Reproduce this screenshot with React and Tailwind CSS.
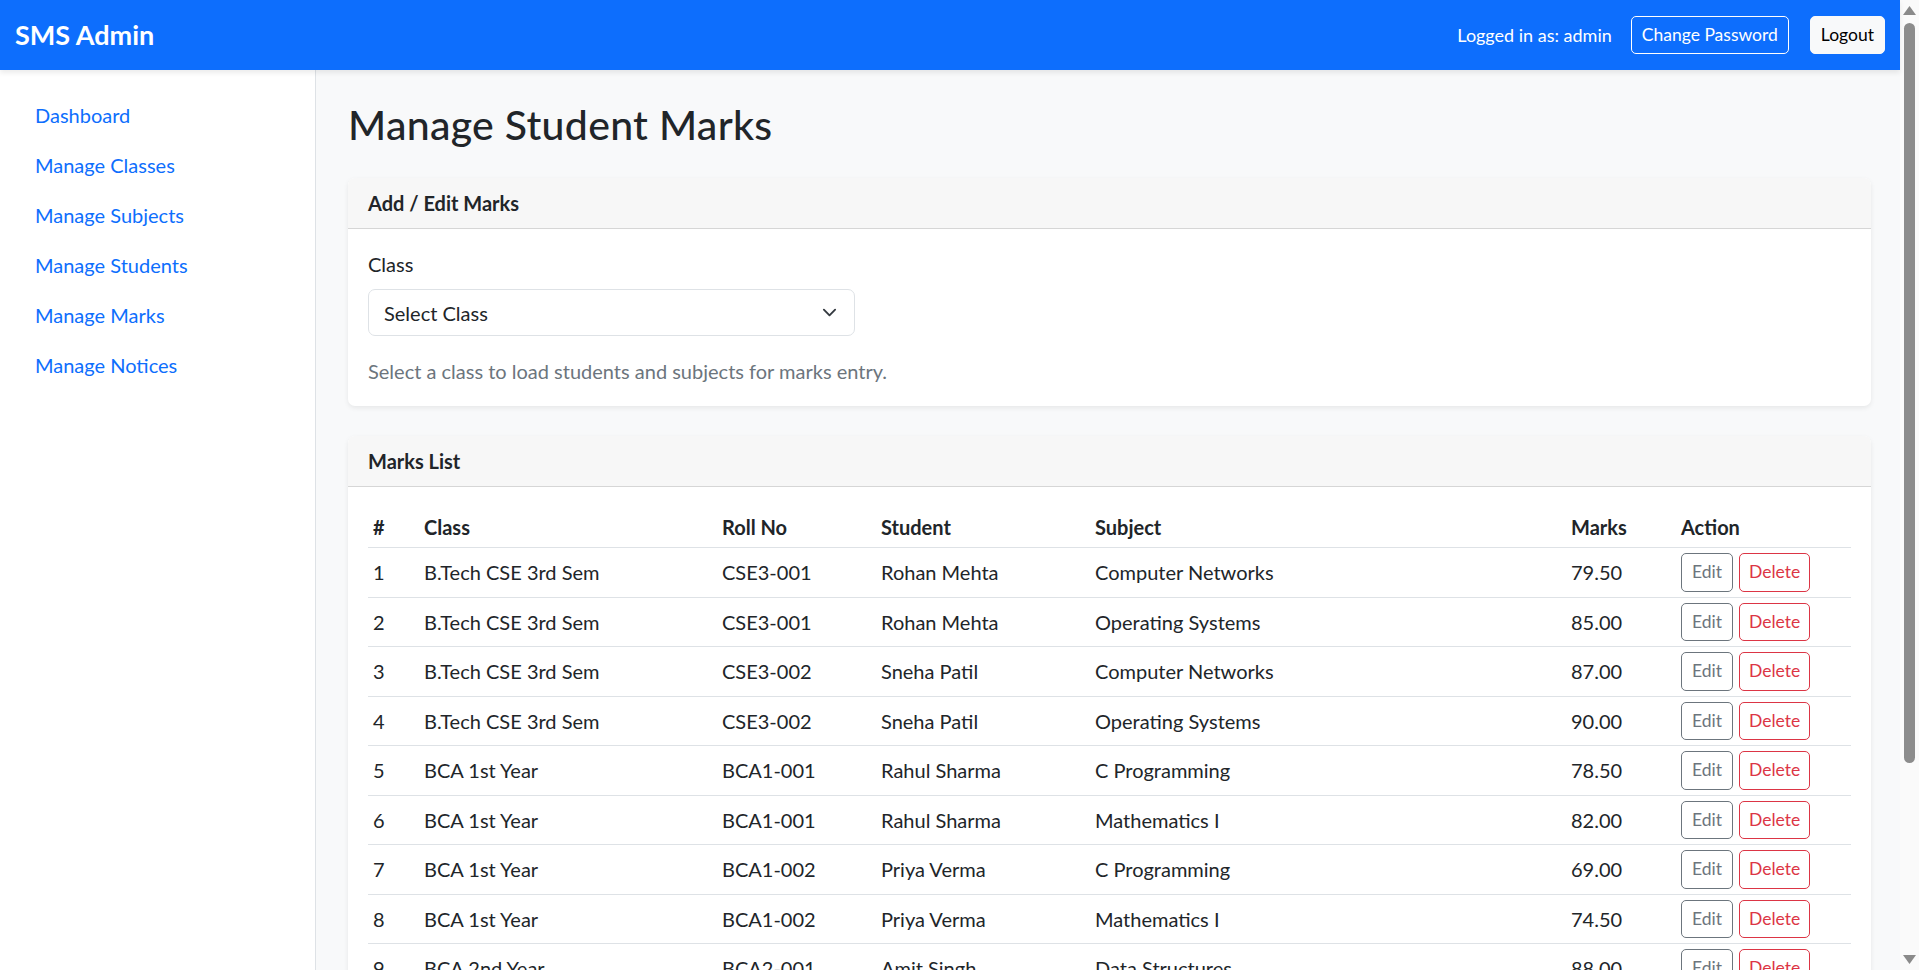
import React from 'react';

const marks = [
    { cls: 'B.Tech CSE 3rd Sem', roll: 'CSE3-001', student: 'Rohan Mehta', subject: 'Computer Networks', marks: '79.50' },
    { cls: 'B.Tech CSE 3rd Sem', roll: 'CSE3-001', student: 'Rohan Mehta', subject: 'Operating Systems', marks: '85.00' },
    { cls: 'B.Tech CSE 3rd Sem', roll: 'CSE3-002', student: 'Sneha Patil', subject: 'Computer Networks', marks: '87.00' },
    { cls: 'B.Tech CSE 3rd Sem', roll: 'CSE3-002', student: 'Sneha Patil', subject: 'Operating Systems', marks: '90.00' },
    { cls: 'BCA 1st Year', roll: 'BCA1-001', student: 'Rahul Sharma', subject: 'C Programming', marks: '78.50' },
    { cls: 'BCA 1st Year', roll: 'BCA1-001', student: 'Rahul Sharma', subject: 'Mathematics I', marks: '82.00' },
    { cls: 'BCA 1st Year', roll: 'BCA1-002', student: 'Priya Verma', subject: 'C Programming', marks: '69.00' },
    { cls: 'BCA 1st Year', roll: 'BCA1-002', student: 'Priya Verma', subject: 'Mathematics I', marks: '74.50' },
    { cls: 'BCA 2nd Year', roll: 'BCA2-001', student: 'Amit Singh', subject: 'Data Structures', marks: '88.00' },
];

const links = ['Dashboard', 'Manage Classes', 'Manage Subjects', 'Manage Students', 'Manage Marks', 'Manage Notices'];

const App = () => {
    return (
        <div className="flex h-[970px] w-full overflow-hidden font-['Lato','Noto_Sans',sans-serif] text-[20px] leading-[30px] text-[#212529]">
            <div className="flex min-w-0 flex-1 flex-col">
                {/* NAVBAR */}
                <nav className="relative z-10 flex h-[70px] shrink-0 items-center justify-between bg-[#0d6efd] px-[15px] shadow-[0_3px_5px_rgba(0,0,0,0.08)]">
                    <span className="text-[27px] font-bold text-white">SMS Admin</span>
                    <div className="flex items-center">
                        <span className="mr-[19px] text-[18px] text-white">Logged in as: admin</span>
                        <button className="mr-[21px] rounded-[5px] border border-white px-[10px] py-[5px] text-[17.5px] leading-[26px] text-white">
                            Change Password
                        </button>
                        <button className="rounded-[5px] border border-[#f8f9fa] bg-[#f8f9fa] px-[10px] py-[5px] text-[17.5px] leading-[26px] text-black">
                            Logout
                        </button>
                    </div>
                </nav>

                <div className="flex min-h-0 flex-1">
                    {/* SIDEBAR */}
                    <aside className="w-[316px] shrink-0 border-r border-[#dee2e6] bg-white px-[15px] py-[20px]">
                        <ul className="flex flex-col">
                            {links.map(l => (
                                <li key={l}>
                                    <a className="block px-[20px] py-[10px] text-[#0d6efd]">{l}</a>
                                </li>
                            ))}
                        </ul>
                    </aside>

                    {/* MAIN */}
                    <main className="min-w-0 flex-1 bg-[#f8f9fa] pl-[32px] pr-[29px] pt-[31px]">
                        <h2 className="mb-[29px] text-[41px] font-medium leading-[48px] tracking-[0.3px]">Manage Student Marks</h2>

                        {/* ADD / EDIT */}
                        <div className="mb-[30px] overflow-hidden rounded-[7px] bg-white shadow-[0_2px_5px_rgba(0,0,0,0.075)]">
                            <div className="border-b border-[#d6d6d6] bg-[#f7f7f7] px-[20px] py-[10px] font-bold">Add / Edit Marks</div>
                            <div className="p-[20px]">
                                <label className="mb-[10px] block">Class</label>
                                <div className="flex h-[47px] w-[487px] items-center justify-between rounded-[7px] border border-[#dee2e6] bg-white pl-[15px] pr-[17px]">
                                    <span>Select Class</span>
                                    <svg width="15" height="15" viewBox="0 0 16 16" fill="none" stroke="#343a40" strokeWidth="2" strokeLinecap="round" strokeLinejoin="round">
                                        <path d="m2 5 6 6 6-6" />
                                    </svg>
                                </div>
                                <p className="mt-[20px] text-[#6c757d]">Select a class to load students and subjects for marks entry.</p>
                            </div>
                        </div>

                        {/* MARKS LIST */}
                        <div className="overflow-hidden rounded-[7px] bg-white shadow-[0_2px_5px_rgba(0,0,0,0.075)]">
                            <div className="border-b border-[#d6d6d6] bg-[#f7f7f7] px-[20px] py-[10px] font-bold">Marks List</div>
                            <div className="p-[20px]">
                                <table className="w-full table-fixed border-collapse text-left">
                                    <colgroup>
                                        <col className="w-[51px]" />
                                        <col className="w-[298px]" />
                                        <col className="w-[159px]" />
                                        <col className="w-[214px]" />
                                        <col className="w-[476px]" />
                                        <col className="w-[110px]" />
                                        <col />
                                    </colgroup>
                                    <thead>
                                        <tr className="border-b border-[#dee2e6]">
                                            {['#', 'Class', 'Roll No', 'Student', 'Subject', 'Marks', 'Action'].map(h => (
                                                <th key={h} className="p-[5px] font-bold">{h}</th>
                                            ))}
                                        </tr>
                                    </thead>
                                    <tbody>
                                        {marks.map((m, i) => (
                                            <tr key={i} className="border-b border-[#dee2e6]">
                                                <td className="p-[5px] align-middle">{i + 1}</td>
                                                <td className="p-[5px] align-middle">{m.cls}</td>
                                                <td className="p-[5px] align-middle">{m.roll}</td>
                                                <td className="p-[5px] align-middle">{m.student}</td>
                                                <td className="p-[5px] align-middle">{m.subject}</td>
                                                <td className="p-[5px] align-middle">{m.marks}</td>
                                                <td className="p-[5px] align-middle">
                                                    <div className="flex gap-[6px]">
                                                        <button className="rounded-[5px] border border-[#6c757d] px-[10px] py-[5px] text-[17.5px] leading-[26.5px] text-[#6c757d]">Edit</button>
                                                        <button className="rounded-[5px] border border-[#dc3545] px-[9px] py-[5px] text-[17.5px] leading-[26.5px] text-[#dc3545]">Delete</button>
                                                    </div>
                                                </td>
                                            </tr>
                                        ))}
                                    </tbody>
                                </table>
                            </div>
                        </div>
                    </main>
                </div>
            </div>

            {/* SCROLLBAR */}
            <div className="flex w-[19px] shrink-0 flex-col items-center bg-[#fafafa] pt-[6px]">
                <svg width="13" height="9" viewBox="0 0 13 9"><path d="M6.5 0 13 9H0z" fill="#8a8a8a" /></svg>
                <div className="mt-[8px] h-[740px] w-[11px] rounded-full bg-[#8c8c8c]" />
                <div className="flex-1" />
                <svg className="mb-[6px]" width="13" height="9" viewBox="0 0 13 9"><path d="M0 0h13L6.5 9z" fill="#8a8a8a" /></svg>
            </div>
        </div>
    );
};

export default App;
